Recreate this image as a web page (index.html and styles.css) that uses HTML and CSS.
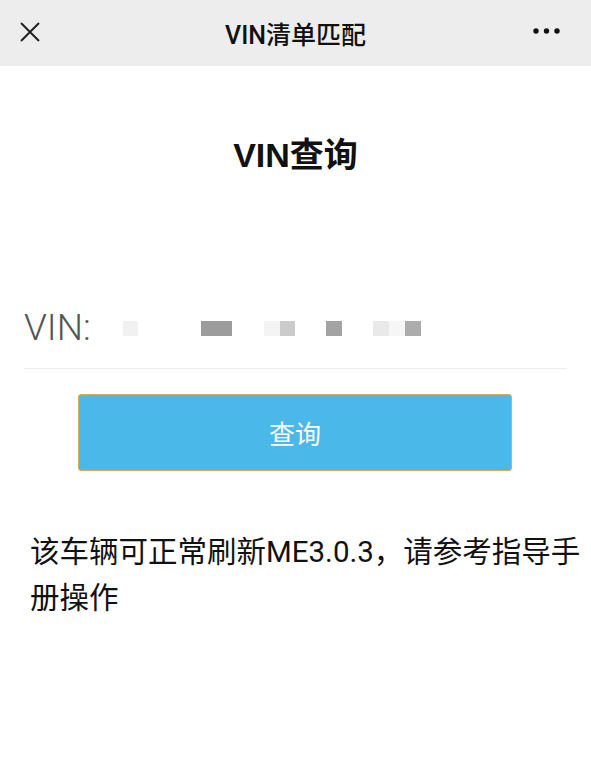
FILE: index.html
```html
<!DOCTYPE html>
<html lang="zh-CN">
<head>
    <meta charset="UTF-8">
    <meta name="viewport" content="width=device-width, initial-scale=1.0">
    <title>VIN清单匹配</title>
    <link rel="stylesheet" href="styles.css">
</head>
<body>
<div class="topbar">
    <svg class="close-icon" width="22" height="22" viewBox="0 0 22 22">
        <path d="M2 2 L20 20 M20 2 L2 20" stroke="#222" stroke-width="2" fill="none"/>
    </svg>
    <div class="topbar-title">VIN清单匹配</div>
    <svg class="more-icon" width="30" height="8" viewBox="0 0 30 8">
        <circle cx="4" cy="4" r="2.7" fill="#111"/>
        <circle cx="14.5" cy="4" r="2.7" fill="#111"/>
        <circle cx="25" cy="4" r="2.7" fill="#111"/>
    </svg>
</div>

<div class="content">
    <h1>VIN查询</h1>

    <div class="vin-row">
        <span class="vin-label">VIN:</span>
        <div class="vin-value">
            <span class="blur b1"></span>
            <span class="blur b2"></span>
            <span class="blur b3"></span>
            <span class="blur b4"></span>
            <span class="blur b5"></span>
            <span class="blur b6"></span>
            <span class="blur b7"></span>
            <span class="blur b8"></span>
        </div>
    </div>

    <button class="query-btn">查询</button>

    <p class="result">该车辆可正常刷新ME3.0.3，请参考指导手册操作</p>
</div>
</body>
</html>
```

FILE: styles.css
```css
body {
    margin: 0;
    padding: 0;
    background-color: #fff;
    color: #111;
    font-family: "Roboto", "Noto Sans CJK SC", sans-serif;
}

.topbar {
    height: 66px;
    background-color: #ededed;
    display: flex;
    align-items: center;
    justify-content: space-between;
    padding: 0 29px 0 19px;
    position: relative;
}

.topbar-title {
    position: absolute;
    left: 0;
    right: 0;
    text-align: center;
    font-size: 25px;
    font-weight: 500;
    color: #111;
    pointer-events: none;
}

.close-icon {
    margin-top: -3px;
}

.more-icon {
    margin-top: -4px;
}

.content {
    padding: 0 24px;
}

h1 {
    margin: 64px 0 0;
    text-align: center;
    font-size: 34px;
    font-weight: bold;
    font-family: "Liberation Sans", "Noto Sans CJK SC", sans-serif;
    line-height: 50px;
}

.vin-row {
    margin-top: 116px;
    display: flex;
    align-items: center;
    height: 62px;
    border-bottom: 1px solid #ebebeb;
    padding-bottom: 10px;
}

.vin-label {
    font-size: 37px;
    color: #555;
    font-weight: 300;
    width: 99px;
}

.vin-value {
    display: flex;
    height: 15px;
    margin-top: 2px;
    position: relative;
}

.blur {
    display: block;
    height: 15px;
}

.b1 { width: 15px; background: #f1f1f1; }
.b2 { width: 31px; margin-left: 63px; background: #9c9c9c; }
.b3 { width: 16px; margin-left: 32px; background: #f4f4f4; }
.b4 { width: 15px; background: #cbcbcb; }
.b5 { width: 16px; margin-left: 31px; background: #a3a3a3; }
.b6 { width: 16px; margin-left: 31px; background: #e9e9e9; }
.b7 { width: 16px; background: #f6f6f6; }
.b8 { width: 16px; background: #acacac; }

.query-btn {
    display: block;
    margin: 25px 0 0 54px;
    width: 434px;
    height: 77px;
    background-color: #4ab8e8;
    border: 1px solid #d6ae55;
    border-radius: 3px;
    color: #fff;
    font-size: 26px;
    font-family: "Noto Sans CJK SC", sans-serif;
    padding: 0;
}

.result {
    margin: 58px -24px 0 6px;
    font-size: 29.5px;
    line-height: 46px;
    color: #111;
}
```
